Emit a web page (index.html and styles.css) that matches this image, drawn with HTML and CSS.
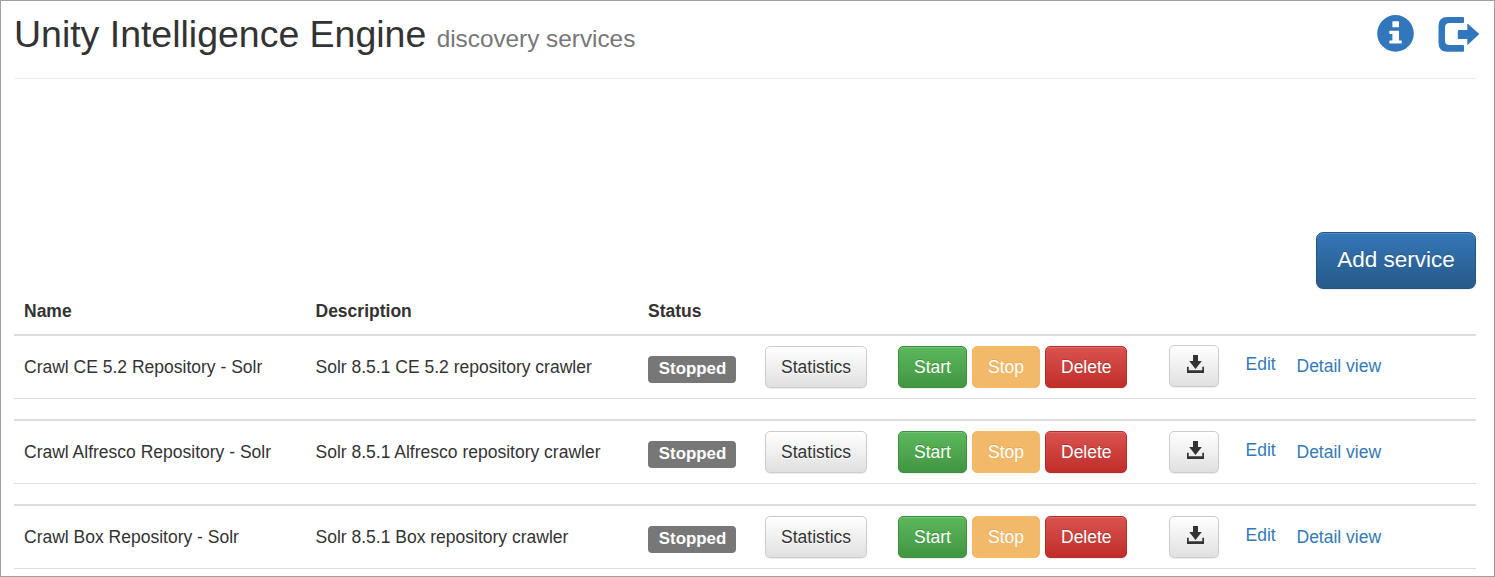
FILE: index.html
```html
<!DOCTYPE html>
<html lang="en">
<head>
<meta charset="utf-8">
<title>Unity Intelligence Engine</title>
<link rel="stylesheet" href="styles.css">
</head>
<body>
<svg class="defs" width="0" height="0">
  <symbol id="download" viewBox="0 0 17 18">
    <path d="M6 0h5v6h3.800L8.500 14 2.200 6H6zM0 11.700h1.700v3.500h13.600v-3.500H17V18H0z"/>
  </symbol>
</svg>
<div class="page">
  <header class="page-header">
    <h1>Unity Intelligence Engine <small>discovery services</small></h1>
    <nav class="tools">
      <a class="tool" href="#" aria-label="Information">
        <svg width="37" height="37" viewBox="0 0 37 37"><path fill-rule="evenodd" d="M18.500.1a18.300 18.300 0 1 0 0 36.600 18.300 18.300 0 0 0 0-36.600zM16 6.200h5.400q.6 0 .6.600v4.900q0 .6-.6.600H16q-.6 0-.6-.6V6.800q0-.6.600-.6zM12.900 15.800h8.500q.6 0 .6.600v9.200h2.200q.6 0 .6.600v1.600q0 .6-.6.600H12.900q-.6 0-.6-.6v-1.600q0-.6.600-.6h2.500v-6.700h-2.500q-.6 0-.6-.6v-1.900q0-.6.600-.6z"/></svg>
      </a>
      <a class="tool" href="#" aria-label="Log out">
        <svg width="42" height="36" viewBox="0 0 42 36"><path d="M9.500 1H25q1 0 1 1v4q0 1-1 1H11.500Q7 7 7 11.500v13Q7 29 11.500 29H25q1 0 1 1v4.800q0 1-1 1H9.500Q.5 35.800.5 26.800V10Q.5 1 9.500 1zM29.300 8.400q0-1 .8-.3L41.300 18 30.100 28.500q-.8.700-.8-.3V23H20.800q-1 0-1-1v-7q0-1 1-1h8.500z"/></svg>
      </a>
    </nav>
  </header>
  <div class="toolbar"><button class="btn primary">Add service</button></div>
  <main class="services">
    <div class="columns head"><span>Name</span><span>Description</span><span>Status</span></div>
    <div class="columns service">
      <span>Crawl CE 5.2 Repository - Solr</span><span>Solr 8.5.1 CE 5.2 repository crawler</span>
      <span class="label">Stopped</span>
      <button class="btn default">Statistics</button>
      <div class="actions"><button class="btn success">Start</button><button class="btn warning">Stop</button><button class="btn danger">Delete</button></div>
      <button class="btn default download" aria-label="Download"><svg width="17" height="18"><use href="#download"/></svg></button>
      <a class="edit" href="#">Edit</a><a class="detail" href="#">Detail view</a>
    </div>
    <div class="columns service">
      <span>Crawl Alfresco Repository - Solr</span><span>Solr 8.5.1 Alfresco repository crawler</span>
      <span class="label">Stopped</span>
      <button class="btn default">Statistics</button>
      <div class="actions"><button class="btn success">Start</button><button class="btn warning">Stop</button><button class="btn danger">Delete</button></div>
      <button class="btn default download" aria-label="Download"><svg width="17" height="18"><use href="#download"/></svg></button>
      <a class="edit" href="#">Edit</a><a class="detail" href="#">Detail view</a>
    </div>
    <div class="columns service">
      <span>Crawl Box Repository - Solr</span><span>Solr 8.5.1 Box repository crawler</span>
      <span class="label">Stopped</span>
      <button class="btn default">Statistics</button>
      <div class="actions"><button class="btn success">Start</button><button class="btn warning">Stop</button><button class="btn danger">Delete</button></div>
      <button class="btn default download" aria-label="Download"><svg width="17" height="18"><use href="#download"/></svg></button>
      <a class="edit" href="#">Edit</a><a class="detail" href="#">Detail view</a>
    </div>
  </main>
</div>
</body>
</html>
```

FILE: styles.css
```css
* { box-sizing: border-box; }
body {
  margin: 0;
  background: #fff;
  color: #333;
  font: 17.5px/25px "Liberation Sans", Arial, sans-serif;
}
.defs { display: block; }
.page {
  height: 577px;
  padding: 0 18px 0 13px;
  border: 1px solid #a0a0a0;
  overflow: hidden;
}
.page-header {
  display: flex;
  justify-content: space-between;
  height: 78px;
  border-bottom: 1px solid #eee;
}
h1 {
  margin: 13px 0 0;
  font-size: 37.5px;
  font-weight: 400;
  line-height: 41px;
  letter-spacing: -0.02px;
}
h1 small { color: #777; font-size: 65%; line-height: 1; }
.tools { display: flex; gap: 24.500px; margin-right: -4px; }
.tool { margin-top: 13.500px; fill: #3276bc; }
.tool + .tool { margin-top: 15px; }
.tool svg { display: block; }
.toolbar { display: flex; justify-content: flex-end; padding-top: 153px; }

.columns {
  display: grid;
  grid-template-columns: 291.500px 332.500px 117px 133px 271px 76.500px 51px 1fr;
  align-items: start;
  justify-items: start;
  padding-left: 10px;
  white-space: nowrap;
}
.head { height: 45px; padding-top: 10px; font-weight: 700; }
.service {
  height: 65px;
  margin-bottom: 20px;
  padding-top: 10px;
  border-top: 2px solid #ddd;
  border-bottom: 1px solid #ddd;
}
.service > span { margin-top: 9px; }
.service > .label {
  width: 88px;
  height: 27px;
  margin-top: 10px;
  padding-left: 1px;
  border-radius: 4px;
  background: #777;
  color: #fff;
  font-size: 16.875px;
  font-weight: 700;
  line-height: 25px;
  text-align: center;
}
.btn {
  height: 42px;
  padding: 0 15px;
  border: 1px solid;
  border-radius: 5px;
  color: #fff;
  font: inherit;
  text-shadow: 0 -1px 0 rgba(0, 0, 0, .2);
  box-shadow: inset 0 1px 0 rgba(255, 255, 255, .15), 0 1px 1px rgba(0, 0, 0, .075);
}
.primary {
  width: 160px;
  height: 57px;
  padding-bottom: 2px;
  border-color: #245580;
  border-radius: 7px;
  background: linear-gradient(#3576b9, #265a88);
  font-size: 22.5px;
}
.default {
  width: 102px;
  border-color: #ccc;
  background: linear-gradient(#fff, #e0e0e0);
  color: #333;
  text-shadow: 0 1px 0 #fff;
}
.actions { display: flex; gap: 5px; }
.success { width: 69px; border-color: #3e8f3e; background: linear-gradient(#5cb85c, #419641); }
.warning {
  width: 68px;
  border-color: #f2b968;
  background: #f2b968;
  box-shadow: none;
  text-shadow: 0 -1px 0 rgba(0, 0, 0, .1);
}
.danger { width: 82px; border-color: #b92c28; background: linear-gradient(#d9534f, #c12e2a); }
.download {
  display: grid;
  place-items: center;
  width: 50px;
  margin-top: -1px;
  padding: 0 0 4px 2px;
  fill: #333;
}
a { color: #337ab7; text-decoration: none; }
.edit { margin-top: 6px; }
.detail { margin-top: 8px; }
.service + .service .download { margin-top: 0; }
.service + .service .edit { margin-top: 7px; }
.service + .service .detail { margin-top: 9px; }
```
